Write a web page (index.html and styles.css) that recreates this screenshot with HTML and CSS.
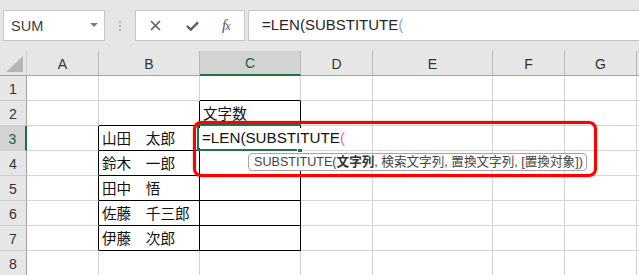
FILE: index.html
```html
<!DOCTYPE html>
<html lang="ja">
<head>
<meta charset="utf-8">
<title>Excel</title>
<link rel="stylesheet" href="styles.css">
</head>
<body>
<div class="topbar">
  <div class="namebox"><span class="nb-text">SUM</span><span class="caret"></span></div>
  <div class="sep"><i></i><i></i><i></i></div>
  <div class="fxbtns">
    <svg class="ic-x" width="11" height="11" viewBox="0 0 11 11"><path d="M1 1L10 10M10 1L1 10" stroke="#5f5f5f" stroke-width="1.6" fill="none"/></svg>
    <svg class="ic-ok" width="13" height="10" viewBox="0 0 13 10"><path d="M1 5L4.8 8.6L12 1.4" stroke="#5f5f5f" stroke-width="2.4" fill="none"/></svg>
    <span class="ic-fx">f<span class="fx-x">x</span></span>
  </div>
  <div class="formula">=LEN(SUBSTITUTE<span class="fparen">(</span></div>
</div>
<div class="sheet">
  <div class="corner"><div class="tri"></div></div>
  <div class="ch">A</div><div class="ch">B</div><div class="ch sel">C</div><div class="ch">D</div><div class="ch">E</div><div class="ch">F</div><div class="ch">G</div><div class="ch end"></div>

  <div class="rh">1</div>
  <div class="c"></div><div class="c"></div><div class="c bb"></div><div class="c"></div><div class="c"></div><div class="c"></div><div class="c"></div><div class="c end"></div>

  <div class="rh">2</div>
  <div class="c"></div><div class="c br bb"></div><div class="c br bb"><span class="t">文字数</span></div><div class="c"></div><div class="c"></div><div class="c"></div><div class="c"></div><div class="c end"></div>

  <div class="rh sel">3</div>
  <div class="c br"></div><div class="c br bb"><span class="t">山田　太郎</span></div><div class="c br bb"></div><div class="c"></div><div class="c"></div><div class="c"></div><div class="c"></div><div class="c end"></div>

  <div class="rh">4</div>
  <div class="c br"></div><div class="c br bb"><span class="t">鈴木　一郎</span></div><div class="c br bb"></div><div class="c"></div><div class="c"></div><div class="c"></div><div class="c"></div><div class="c end"></div>

  <div class="rh">5</div>
  <div class="c br"></div><div class="c br bb"><span class="t">田中　悟</span></div><div class="c br bb"></div><div class="c"></div><div class="c"></div><div class="c"></div><div class="c"></div><div class="c end"></div>

  <div class="rh">6</div>
  <div class="c br"></div><div class="c br bb"><span class="t">佐藤　千三郎</span></div><div class="c br bb"></div><div class="c"></div><div class="c"></div><div class="c"></div><div class="c"></div><div class="c end"></div>

  <div class="rh">7</div>
  <div class="c br"></div><div class="c br bb"><span class="t">伊藤　次郎</span></div><div class="c br bb"></div><div class="c"></div><div class="c"></div><div class="c"></div><div class="c"></div><div class="c end"></div>

  <div class="rh">8</div>
  <div class="c"></div><div class="c"></div><div class="c"></div><div class="c"></div><div class="c"></div><div class="c"></div><div class="c"></div><div class="c end"></div>

  <div class="editcell"><span class="edit-text">=LEN(SUBSTITUTE<span class="cparen">(</span></span></div>
  <div class="handle"></div>
  <div class="tip">SUBSTITUTE(<b>文字列</b>, 検索文字列, 置換文字列, [置換対象])</div>
  <div class="redbox"></div>
</div>
</body>
</html>
```
FILE: styles.css
```css
* { box-sizing: border-box; }
html, body { margin: 0; padding: 0; }
body {
  width: 639px;
  height: 275px;
  overflow: hidden;
  background: #ffffff;
  font-family: "Liberation Sans", "Noto Sans CJK JP", sans-serif;
}

/* ---------- top formula bar ---------- */
.topbar {
  height: 51px;
  background: #e6e6e6;
  display: flex;
  align-items: flex-start;
  padding-top: 10px;
}
.namebox {
  margin-left: 3px;
  width: 102px;
  height: 31px;
  background: #fff;
  border: 1px solid #c6c6c6;
  display: flex;
  align-items: center;
  justify-content: space-between;
  padding: 1px 6px 0 7px;
}
.nb-text {
  font-size: 14.5px;
  color: #404040;
}
.caret {
  width: 0; height: 0;
  border-left: 4px solid transparent;
  border-right: 4px solid transparent;
  border-top: 4px solid #7a7a7a;
  margin-top: -3px;
}
.sep {
  width: 30px;
  height: 31px;
  display: flex;
  flex-direction: column;
  align-items: center;
  justify-content: center;
  gap: 2px;
}
.sep i {
  display: block;
  width: 2px;
  height: 2px;
  background: #b0b0b0;
}
.fxbtns {
  width: 110px;
  height: 31px;
  background: #fff;
  border: 1px solid #c6c6c6;
  display: flex;
  align-items: center;
  padding-left: 14px;
}
.ic-x { margin-right: 25px; }
.ic-ok { margin-right: 23px; }
.ic-fx {
  font-family: "Liberation Serif", serif;
  font-style: italic;
  font-size: 15px;
  color: #555;
  letter-spacing: -1px;
}
.fx-x { font-size: 12px; }
.formula {
  margin-left: 3px;
  flex: 1;
  height: 31px;
  background: #fff;
  border-top: 1px solid #c6c6c6;
  border-bottom: 1px solid #c6c6c6;
  border-left: 1px solid #c6c6c6;
  padding: 5px 0 0 13px;
  font-size: 15px;
  color: #262626;
  white-space: nowrap;
}
.fparen { color: #8fa6c8; }

/* ---------- sheet grid ---------- */
.sheet {
  position: relative;
  display: grid;
  grid-template-columns: 27px 72px 101px 101px 72px 120px 72px 72px 1fr;
  grid-template-rows: repeat(9, 25px);
}
.corner {
  background: #e6e6e6;
  border-right: 1px solid #cfcfcf;
  border-bottom: 1px solid #a3a3a3;
  position: relative;
  display: flex;
  align-items: flex-end;
  justify-content: flex-end;
  padding: 0 3px 3px 0;
}
.tri {
  width: 17px;
  height: 16px;
  background: #b6b6b6;
  clip-path: polygon(100% 0, 100% 100%, 0 100%);
}
.ch {
  background: #e6e6e6;
  border-right: 1px solid #b9b9b9;
  border-bottom: 1px solid #a3a3a3;
  display: flex;
  align-items: center;
  justify-content: center;
  font-size: 14px;
  color: #333;
  padding-top: 1px;
}
.ch.sel {
  background: #d3d3d3;
  color: #1e5e3b;
  border-bottom: 2px solid #217346;
}
.ch.end { border-right: none; }
.rh {
  background: #e6e6e6;
  border-right: 1px solid #a3a3a3;
  border-bottom: 1px solid #cdcdcd;
  display: flex;
  align-items: center;
  justify-content: center;
  font-size: 14px;
  color: #333;
  padding-top: 2px;
}
.rh.sel {
  background: #d3d3d3;
  color: #1e5e3b;
  border-right: 2px solid #217346;
}
.c {
  border-right: 1px solid #d4d4d4;
  border-bottom: 1px solid #d4d4d4;
  display: flex;
  align-items: center;
  padding: 2px 0 0 3px;
  font-size: 14.6px;
  color: #111;
  white-space: nowrap;
}
.c.end { border-right: none; }
.c.br { border-right-color: #000; }
.c.bb { border-bottom-color: #000; }
.t { line-height: 1; }

/* ---------- editing overlay ---------- */
.editcell {
  position: absolute;
  left: 197px;
  top: 73px;
  width: 104px;
  height: 27px;
  border-top: 2px solid #217346;
  border-left: 2px solid #217346;
  border-bottom: 2px solid #217346;
  display: flex;
  align-items: center;
  padding-top: 1px;
  white-space: nowrap;
}
.edit-text {
  background: #fff;
  padding: 0 8px 0 3px;
  font-size: 15.2px;
  color: #111;
  line-height: 20px;
}
.cparen { color: #e2728c; }
.handle {
  position: absolute;
  left: 297px;
  top: 97px;
  width: 6px;
  height: 5px;
  background: #217346;
  border: 1px solid #fff;
}
.tip {
  position: absolute;
  left: 248px;
  top: 102px;
  width: 339px;
  height: 18px;
  background: #fff;
  border: 1px solid #a3a3a3;
  border-radius: 4px;
  font-size: 12.6px;
  color: #444;
  padding: 1px 0 0 5px;
  white-space: nowrap;
  line-height: 15px;
}
.tip b { color: #333; }
.redbox {
  position: absolute;
  left: 193px;
  top: 70px;
  width: 404px;
  height: 56px;
  border: 3px solid #ff0000;
  border-radius: 8px;
  box-shadow: 0 0 2px rgba(120, 0, 0, 0.45), inset 0 0 1px rgba(120, 0, 0, 0.3);
}
```
